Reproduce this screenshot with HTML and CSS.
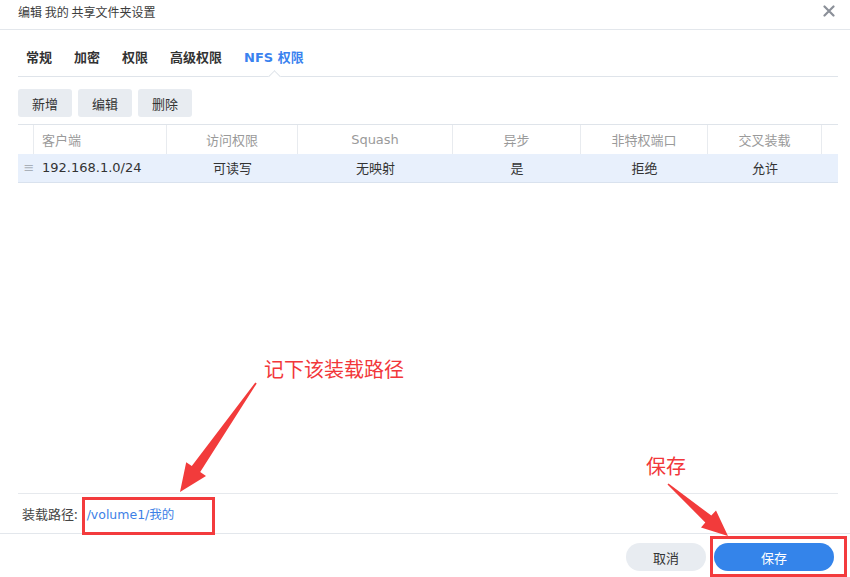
FILE: index.html
```
<!DOCTYPE html>
<html lang="zh-CN">
<head>
<meta charset="utf-8">
<title>编辑 我的 共享文件夹设置</title>
<link rel="stylesheet" href="styles.css">
</head>
<body>
<div class="dialog">
  <div class="titlebar">
    <span class="title">编辑 我的 共享文件夹设置</span>
    <svg class="close" width="12" height="12" viewBox="0 0 12 12"><path d="M1.5 1.5 L10.5 10.5 M10.5 1.5 L1.5 10.5" stroke="#8b9099" stroke-width="2.2" stroke-linecap="round"/></svg>
  </div>
  <div class="content">
    <div class="tabs">
      <span class="tab">常规</span>
      <span class="tab">加密</span>
      <span class="tab">权限</span>
      <span class="tab">高级权限</span>
      <span class="tab active">NFS 权限</span>
    </div>
    <div class="toolbar">
      <button class="btn">新增</button>
      <button class="btn">编辑</button>
      <button class="btn">删除</button>
    </div>
    <div class="grid">
      <div class="row head">
        <div class="cell c0"></div>
        <div class="cell c1 left">客户端</div>
        <div class="cell c2">访问权限</div>
        <div class="cell c3">Squash</div>
        <div class="cell c4">异步</div>
        <div class="cell c5">非特权端口</div>
        <div class="cell c6">交叉装载</div>
        <div class="cell c7"></div>
      </div>
      <div class="row data">
        <div class="cell c0"><span class="handle">≡</span></div>
        <div class="cell c1 left">192.168.1.0/24</div>
        <div class="cell c2">可读写</div>
        <div class="cell c3">无映射</div>
        <div class="cell c4">是</div>
        <div class="cell c5">拒绝</div>
        <div class="cell c6">允许</div>
        <div class="cell c7"></div>
      </div>
    </div>
    <div class="spacer"></div>
    <div class="mount">
      <span class="mount-label">装载路径:</span>
      <span class="mount-path">/volume1/我的</span>
    </div>
  </div>
  <div class="footer">
    <button class="pill cancel">取消</button>
    <button class="pill save">保存</button>
  </div>

  <div class="note note-path">记下该装载路径</div>
  <div class="note note-save">保存</div>
  <div class="mark mark-path"></div>
  <div class="mark mark-save"></div>
  <svg class="arrows" width="850" height="577" viewBox="0 0 850 577">
    <polygon fill="#f23b3b" points="256.7,383.5 200.2,471.9 206,476 180,492 186.2,462.3 191.8,466.1 255.3,382.5"/>
    <polygon fill="#f23b3b" points="667.5,484.6 705.3,522.4 701,527.6 728,536 716,510.5 711.3,515.6 668.5,483.4"/>
  </svg>
</div>
</body>
</html>
```
FILE: styles.css
```
* { box-sizing: border-box; }
html, body { margin: 0; padding: 0; background: #fff; }
body {
  font-family: "DejaVu Sans", "Noto Sans CJK SC", sans-serif;
  font-size: 13px;
  color: #333;
}
.dialog {
  position: relative;
  width: 850px;
  height: 577px;
  display: flex;
  flex-direction: column;
  overflow: hidden;
}
.titlebar {
  height: 30px;
  border-bottom: 1px solid #e3e7ec;
  display: flex;
  align-items: center;
  justify-content: space-between;
  padding: 0 15px 7px 18px;
}
.title {
  font-size: 12px;
  color: #3c3c3c;
  font-family: "Noto Sans CJK SC", sans-serif;
}
.close { display: block; }
.content {
  flex: 1;
  display: flex;
  flex-direction: column;
  padding: 0 12px 0 18px;
}
.tabs {
  height: 47px;
  border-bottom: 1px solid #dfe4ea;
  display: flex;
  align-items: center;
  gap: 22px;
  padding: 7px 0 0 8px;
}
.tab {
  position: relative;
  font-family: "DejaVu Sans", "Noto Sans CJK SC", sans-serif;
  font-weight: bold;
  font-size: 13px;
  color: #333;
}
.tab.active { color: #3a82ef; }
.tab.active::after {
  content: "";
  position: absolute;
  left: 50%;
  bottom: -15px;
  width: 8px;
  height: 8px;
  margin-left: -4px;
  background: #fff;
  border-left: 1px solid #dfe4ea;
  border-top: 1px solid #dfe4ea;
  transform: rotate(45deg);
}
.toolbar {
  display: flex;
  gap: 6px;
  margin-top: 12px;
}
.btn {
  width: 54px;
  height: 28px;
  border: 0;
  border-radius: 3px;
  background: #e8ecf1;
  font-family: "Noto Sans CJK SC", sans-serif;
  font-size: 13px;
  color: #333;
  padding: 0;
}
.grid {
  margin-top: 7px;
  border-top: 1px solid #dfe4ea;
}
.row {
  display: flex;
  height: 29px;
}
.row.data {
  background: #e8f0fc;
  border-bottom: 1px solid #d9e2ee;
}
.cell {
  display: flex;
  align-items: center;
  justify-content: center;
  white-space: nowrap;
}
.head .cell {
  color: #9a9a9a;
  border-right: 1px solid #e8ebef;
  padding-bottom: 1px;
}
.head .c7 { border-right: 0; }
.data .cell { padding-bottom: 2px; }
.cell.left { justify-content: flex-start; padding-left: 8px; }
.c0 { width: 16px; }
.c1 { width: 133px; }
.c2 { width: 131px; }
.c3 { width: 155px; }
.c4 { width: 128px; }
.c5 { width: 127px; }
.c6 { width: 114px; }
.c7 { flex: 1; }
.data .cell { color: #333; }
.handle {
  color: #a9b0b9;
  font-size: 13px;
  padding-left: 6px;
}
.spacer { flex: 1; }
.mount {
  height: 40px;
  border-top: 1px solid #e6e9ed;
  display: flex;
  align-items: center;
  padding: 0 0 1px 4px;
  gap: 9px;
}
.mount-label {
  font-family: "Noto Sans CJK SC", sans-serif;
  font-size: 13px;
  color: #444;
}
.mount-path {
  color: #3d7fe6;
  font-size: 12.5px;
}
.footer {
  height: 44px;
  border-top: 1px solid #e3e7ec;
  display: flex;
  justify-content: flex-end;
  align-items: flex-start;
  gap: 8px;
  padding: 9px 16px 0 0;
}
.pill {
  height: 28px;
  border: 0;
  border-radius: 14px;
  font-family: "Noto Sans CJK SC", sans-serif;
  font-size: 13px;
  padding: 0;
}
.cancel { width: 80px; background: #e8ecf1; color: #333; }
.save { width: 120px; background: #3484ea; color: #fff; }
.note {
  position: absolute;
  color: #f2373a;
  font-family: "Noto Sans CJK SC", sans-serif;
  font-size: 20px;
  line-height: 24px;
}
.note-path { left: 264px; top: 357px; }
.note-save { left: 646px; top: 454px; }
.mark {
  position: absolute;
  border: 3px solid #f33b3d;
}
.mark-path { left: 82px; top: 497px; width: 133px; height: 38px; }
.mark-save { left: 710px; top: 536px; width: 137px; height: 41px; }
.arrows {
  position: absolute;
  left: 0;
  top: 0;
  pointer-events: none;
}
```
